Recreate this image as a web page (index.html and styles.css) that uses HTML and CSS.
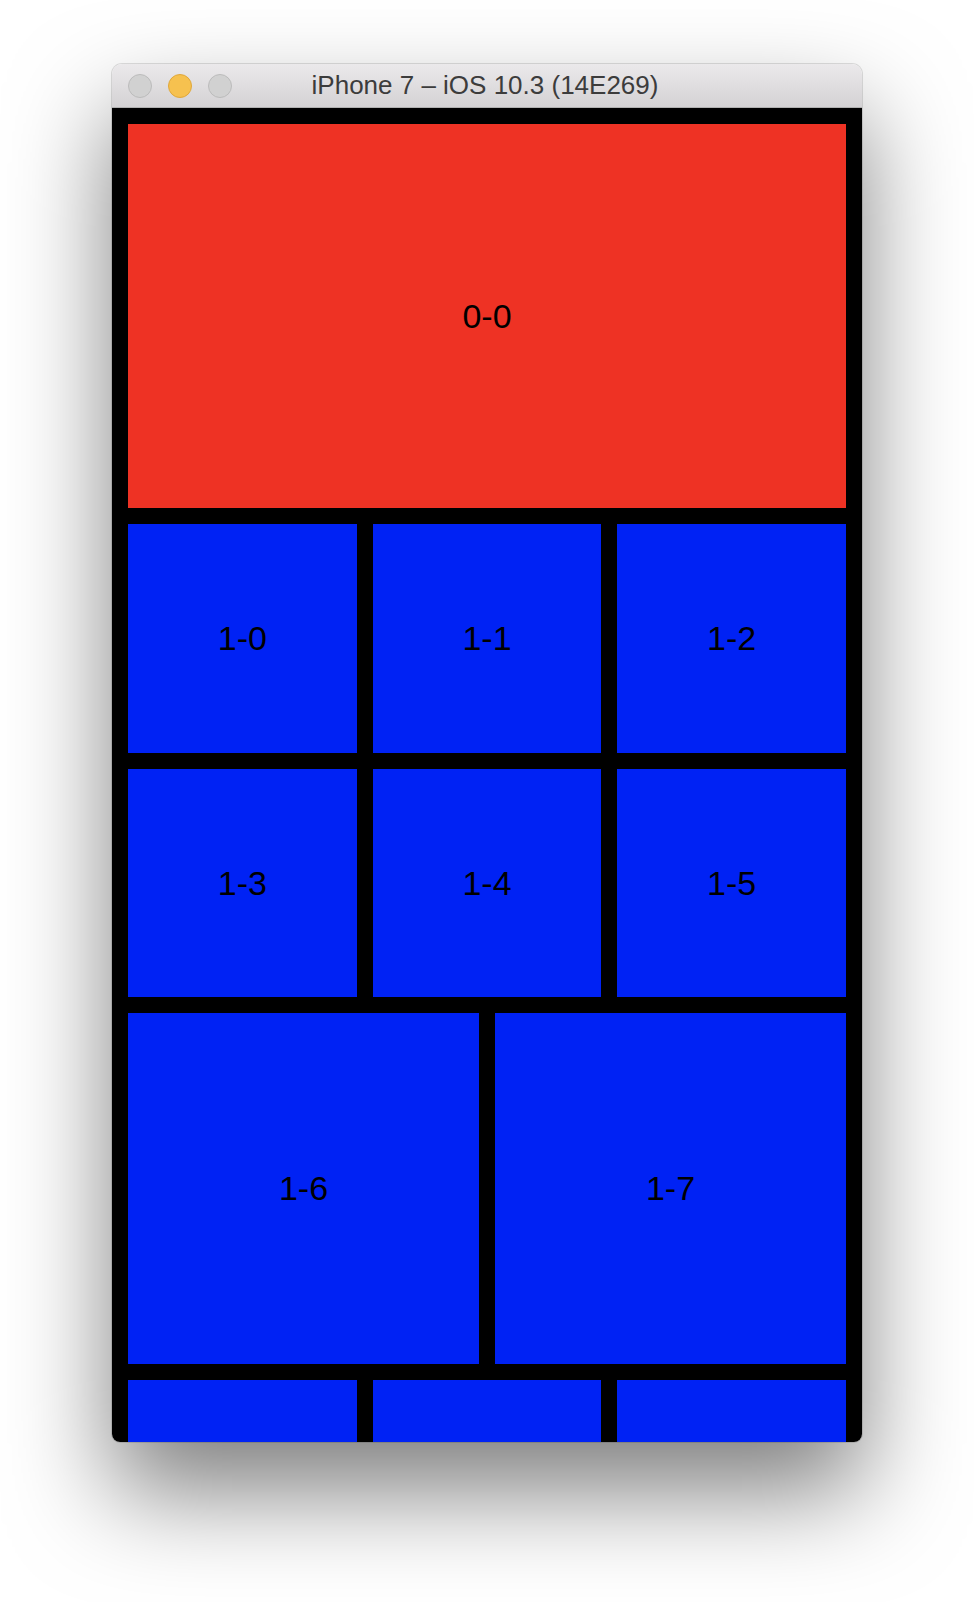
FILE: index.html
```html
<!DOCTYPE html>
<html lang="en">
<head>
  <meta charset="UTF-8" />
  <title>iPhone 7 – iOS 10.3 (14E269)</title>
  <link rel="stylesheet" href="styles.css">
</head>
<body>

  <div class="window">
    <div class="titlebar">
      <div class="lights">
        <span class="light"></span>
        <span class="light light-min"></span>
        <span class="light"></span>
      </div>
      <div class="title">iPhone 7 – iOS 10.3 (14E269)</div>
      <div></div>
    </div>

    <div class="screen">
      <div class="grid">
        <div class="cell header">0-0</div>
        <div class="cell third">1-0</div>
        <div class="cell third">1-1</div>
        <div class="cell third">1-2</div>
        <div class="cell third">1-3</div>
        <div class="cell third">1-4</div>
        <div class="cell third">1-5</div>
        <div class="cell half">1-6</div>
        <div class="cell half">1-7</div>
        <!-- next row scrolls off the bottom of the simulator -->
        <div class="cell third"></div>
        <div class="cell third"></div>
        <div class="cell third"></div>
      </div>
    </div>
  </div>

</body>
</html>
```

FILE: styles.css
```css
html {
  background-color: #ffffff;
}

body {
  margin: 0;
  min-height: 1602px;
  background-color: #ffffff;
  font-family: "Liberation Sans", Helvetica, Arial, sans-serif;
}

.window {
  width: 750px;
  margin: 64px auto 0;
  border-radius: 10px 10px 8px 8px;
  overflow: hidden;
  box-shadow: 0 50px 100px rgba(0, 0, 0, 0.5), 0 0 0 1px rgba(0, 0, 0, 0.12);
}

.titlebar {
  height: 43px;
  display: grid;
  grid-template-columns: 1fr auto 1fr;
  align-items: center;
  padding: 0 16px;
  background: linear-gradient(#ebe9eb, #d4d2d4);
  border-bottom: 1px solid #b1b1b1;
}

.lights {
  display: flex;
  gap: 16px;
}

.light {
  width: 22px;
  height: 22px;
  border-radius: 50%;
  background-color: #d1d1d1;
  border: 1px solid #bbbbbb;
}

.light-min {
  background-color: #f6c14f;
  border-color: #dfa73b;
}

.title {
  font-size: 26px;
  color: #3c3c3c;
  margin-right: 4px;
}

.screen {
  height: 1334px;
  background-color: #000000;
  padding: 16px;
  box-sizing: border-box;
  overflow: hidden;
}

.grid {
  display: grid;
  grid-template-columns: repeat(6, 1fr);
  gap: 16px;
}

.cell {
  display: flex;
  align-items: center;
  justify-content: center;
  background-color: #0022f4;
  color: #000000;
  font-size: 34px;
  aspect-ratio: 1;
}

.header {
  grid-column: span 6;
  aspect-ratio: auto;
  height: 384px;
  background-color: #ee3224;
}

.third {
  grid-column: span 2;
}

.half {
  grid-column: span 3;
}
```
